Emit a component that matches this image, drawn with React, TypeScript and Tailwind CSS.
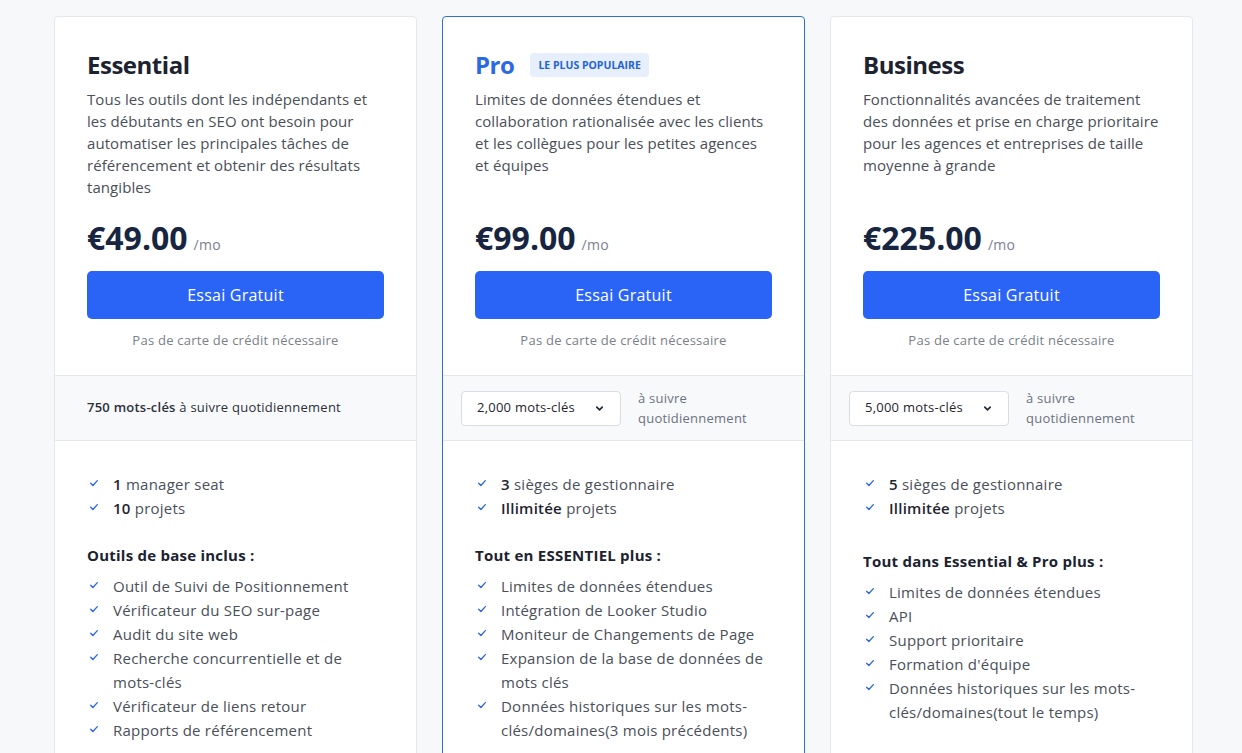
import React from 'react';

type Feature = { bold?: string; text: string };

type Plan = {
  name: string;
  popular?: boolean;
  description: string;
  price: string;
  keywords: string;
  selectable: boolean;
  top: Feature[];
  heading: string;
  headingGap: string;
  features: string[];
};

const plans: Plan[] = [
  {
    name: 'Essential',
    description:
      'Tous les outils dont les indépendants et les débutants en SEO ont besoin pour automatiser les principales tâches de référencement et obtenir des résultats tangibles',
    price: '€49.00',
    keywords: '750 mots-clés',
    selectable: false,
    top: [
      { bold: '1', text: 'manager seat' },
      { bold: '10', text: 'projets' },
    ],
    heading: 'Outils de base inclus :',
    headingGap: 'mt-[23px]',
    features: [
      'Outil de Suivi de Positionnement',
      'Vérificateur du SEO sur-page',
      'Audit du site web',
      'Recherche concurrentielle et de mots-clés',
      'Vérificateur de liens retour',
      'Rapports de référencement',
    ],
  },
  {
    name: 'Pro',
    popular: true,
    description:
      'Limites de données étendues et collaboration rationalisée avec les clients et les collègues pour les petites agences et équipes',
    price: '€99.00',
    keywords: '2,000 mots-clés',
    selectable: true,
    top: [
      { bold: '3', text: 'sièges de gestionnaire' },
      { bold: 'Illimitée', text: 'projets' },
    ],
    heading: 'Tout en ESSENTIEL plus :',
    headingGap: 'mt-[23px]',
    features: [
      'Limites de données étendues',
      'Intégration de Looker Studio',
      'Moniteur de Changements de Page',
      'Expansion de la base de données de mots clés',
      'Données historiques sur les mots-clés/domaines(3 mois précédents)',
    ],
  },
  {
    name: 'Business',
    description:
      'Fonctionnalités avancées de traitement des données et prise en charge prioritaire pour les agences et entreprises de taille moyenne à grande',
    price: '€225.00',
    keywords: '5,000 mots-clés',
    selectable: true,
    top: [
      { bold: '5', text: 'sièges de gestionnaire' },
      { bold: 'Illimitée', text: 'projets' },
    ],
    heading: 'Tout dans Essential & Pro plus :',
    headingGap: 'mt-[29px]',
    features: [
      'Limites de données étendues',
      'API',
      'Support prioritaire',
      "Formation d'équipe",
      'Données historiques sur les mots-clés/domaines(tout le temps)',
    ],
  },
];

const Check = () => (
  <svg viewBox="0 0 12 12" className="w-[10px] h-[10px] mt-[6px] shrink-0 text-[#2b66e8]" fill="none">
    <path d="M2 6.3 4.7 9 10 3.2" stroke="currentColor" strokeWidth="1.6" strokeLinecap="round" strokeLinejoin="round" />
  </svg>
);

const Chevron = () => (
  <svg viewBox="0 0 12 12" className="w-[11px] h-[11px] text-[#1f2937]" fill="none">
    <path d="M3 4.5 6 7.5 9 4.5" stroke="currentColor" strokeWidth="1.8" strokeLinecap="round" strokeLinejoin="round" />
  </svg>
);

const Item = ({ children }: { children: React.ReactNode }) => (
  <li className="flex gap-[14px] pl-[2px]">
    <Check />
    <span>{children}</span>
  </li>
);

const PlanCard = ({ plan }: { plan: Plan }) => (
  <div
    className={`w-[363px] shrink-0 bg-white rounded-[4px] border ${
      plan.popular ? 'border-[#2f6fd6]' : 'border-[#e4e7ec]'
    }`}
  >
    {/* Header */}
    <div className="px-8 pt-8 pb-[25px]">
      <div className="flex items-center gap-4 h-8">
        <h2
          className={`text-[24px] leading-8 font-bold tracking-[-0.02em] ${
            plan.popular ? 'text-[#2b6ae3]' : 'text-[#1c2230]'
          }`}
        >
          {plan.name}
        </h2>
        {plan.popular && (
          <span className="bg-[#e7effc] text-[#2563d4] text-[10.5px] font-bold px-[8px] py-[4px] rounded-[4px] leading-4 tracking-normal">
            LE PLUS POPULAIRE
          </span>
        )}
      </div>
      <p className="mt-[7px] min-h-[110px] text-[15px] leading-[22px] text-[#4a4f59] tracking-[0.005em]">
        {plan.description}
      </p>
      <div className="mt-5 flex items-baseline gap-[6px] h-10">
        <span className="text-[32px] leading-10 font-bold text-[#172540] tracking-normal">{plan.price}</span>
        <span className="text-[14px] text-[#7b8190]">/mo</span>
      </div>
      <button className="mt-[13px] w-full h-12 rounded-[5px] bg-[#2a64f6] text-white text-[16px]">
        Essai Gratuit
      </button>
      <p className="mt-[11px] text-center text-[13px] leading-5 text-[#7a7f88]">Pas de carte de crédit nécessaire</p>
    </div>

    {/* Keywords band */}
    {plan.selectable ? (
      <div className="h-[66px] bg-[#f8f9fb] border-y border-[#e4e7ec] px-[18px] flex items-center gap-[17px]">
        <div className="w-[160px] h-[35px] bg-white border border-[#d9dce2] rounded-[4px] flex items-center justify-between pl-[15px] pr-[15px] text-[13px] text-[#1f2530]">
          <span>{plan.keywords}</span>
          <Chevron />
        </div>
        <div className="text-[13px] leading-5 text-[#6b7280]">
          à suivre
          <br />
          quotidiennement
        </div>
      </div>
    ) : (
      <div className="h-[66px] bg-[#f8f9fb] border-y border-[#e4e7ec] px-8 flex items-center text-[13px] text-[#2b303a]">
        <span className="font-semibold">{plan.keywords}</span>
        <span>&nbsp;à suivre quotidiennement</span>
      </div>
    )}

    {/* Features */}
    <div className="px-8 pt-[31px] pb-10 text-[15px] leading-6 text-[#4a4f59]">
      <ul>
        {plan.top.map((f) => (
          <Item key={f.text + f.bold}>
            <b className="font-semibold text-[#1f2530]">{f.bold}</b> {f.text}
          </Item>
        ))}
      </ul>
      <h3 className={`${plan.headingGap} font-bold text-[#1c2230]`}>{plan.heading}</h3>
      <ul className="mt-[7px]">
        {plan.features.map((f) => (
          <Item key={f}>{f}</Item>
        ))}
      </ul>
    </div>
  </div>
);

export default function App() {
  return (
    <div className="min-h-[753px] bg-[#f7f8fa] pt-4 pl-[54px] overflow-hidden font-['Open_Sans',sans-serif] tracking-[0.015em]">
      <div className="flex gap-[25px] items-start">
        {plans.map((p) => (
          <PlanCard key={p.name} plan={p} />
        ))}
      </div>
    </div>
  );
}
